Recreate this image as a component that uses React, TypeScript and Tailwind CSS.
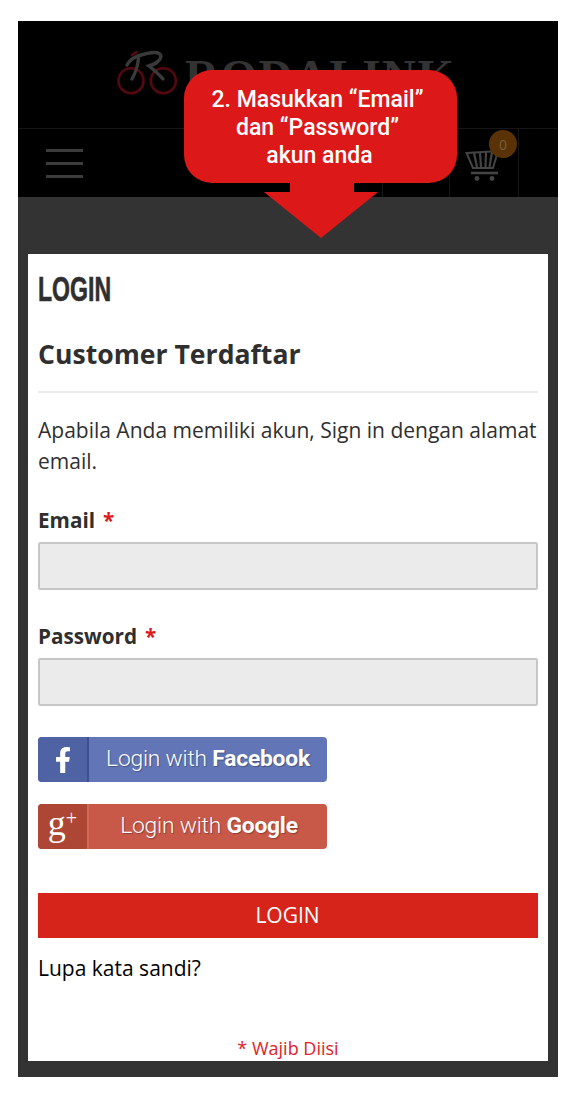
import { FaFacebookF } from "react-icons/fa";

const openSans = { fontFamily: '"Open Sans", sans-serif' };

const Field = ({ label, marginTop }: { label: string; marginTop: string }) => (
  <div className={marginTop}>
    <div className="text-[20.7px] leading-[28px] font-bold text-[#2f2f2f]">
      {label}
      <span className="ml-[8px] text-[#dd1a1a]">*</span>
    </div>
    <div className="mt-[8px] h-[48px] rounded-[2px] border-2 border-[#c6c6c6] bg-[#ebebeb]" />
  </div>
);

const BikeLogo = () => (
  <svg width="62" height="56" viewBox="0 0 62 56" fill="none" strokeLinecap="round">
    <circle cx="14" cy="32.7" r="12.5" stroke="#560810" strokeWidth="2.6" />
    <circle cx="46.3" cy="32.7" r="12.5" stroke="#560810" strokeWidth="2.6" />
    <path d="M10 17 C13 11 19 8 26 6.5 C33 4.5 40 3.5 43 6 C46 10 40 16 32 18 C37 22 42 26 46 31" stroke="#3a3a3a" strokeWidth="3.4" />
    <path d="M21.5 10 C21 17 19 24 15 31" stroke="#3a3a3a" strokeWidth="3.4" />
    <path d="M15 7 L19.5 4" stroke="#5a0a10" strokeWidth="2.4" />
  </svg>
);

const CartIcon = () => (
  <svg width="36" height="36" viewBox="0 0 36 36" fill="none" stroke="#444444">
    <path d="M1.5 6 L33 4 L28 21 H8 Z" strokeWidth="2" />
    <path d="M9 6 L12 20 M15 5.5 L16 20 M21 5 L20.5 20 M27 5 L24.5 20" strokeWidth="2.2" />
    <path d="M6 26 H33" strokeWidth="2.6" />
    <circle cx="12" cy="31.5" r="2.4" fill="#444444" stroke="none" />
    <circle cx="27" cy="31.5" r="2.4" fill="#444444" stroke="none" />
  </svg>
);

const SocialButton = ({
  children,
  icon,
  dark,
  light,
  line,
  className,
}: {
  children: React.ReactNode;
  icon: React.ReactNode;
  dark: string;
  light: string;
  line: string;
  className?: string;
}) => (
  <div className={`flex h-[45px] w-[289px] overflow-hidden rounded-[4px] ${light} ${className ?? ""}`}>
    <div className={`flex w-[51px] items-center justify-center border-r-2 ${dark} ${line}`}>{icon}</div>
    <div
      className="flex flex-1 items-center justify-center text-[22.8px] font-light tracking-[-0.2px] text-white [text-shadow:1px_1px_1px_rgba(0,0,0,0.3)]"
      style={{ fontFamily: "Roboto, sans-serif" }}
    >
      {children}
    </div>
  </div>
);

export default function App() {
  return (
    <div className="h-[1100px] w-[577px] bg-white pl-[18px] pt-[21px]" style={openSans}>
      <div className="relative h-[1056px] w-[540px] bg-[#333333]">
        {/* Header */}
        <div className="h-[176px] bg-black">
          <div className="flex h-[107px] items-start pl-[99px] pt-[27px]">
            <BikeLogo />
            <span
              className="ml-[6px] text-[47px] leading-[56px] font-bold tracking-[1.5px] text-[#333333]"
              style={{ fontFamily: '"Liberation Serif", serif' }}
            >
              RODALINK
            </span>
          </div>
          <div className="flex h-[69px] items-center border-t border-[#161616] pl-[28px]">
            <div className="flex w-[37px] flex-col gap-[10px]">
              <div className="h-[3px] bg-[#3c3c3c]" />
              <div className="h-[3px] bg-[#3c3c3c]" />
              <div className="h-[3px] bg-[#3c3c3c]" />
            </div>
            <div className="ml-[299px] h-full border-l border-[#161616]" />
            <div className="ml-[66px] flex h-full w-[70px] items-end border-x border-[#161616] pb-[14px] pl-[15px]">
              <CartIcon />
            </div>
          </div>
        </div>

        {/* Content */}
        <div className="mx-[10px] mt-[57px] h-[807px] bg-white px-[10px]">
          <h1
            className="origin-left scale-x-[0.66] pt-[15px] text-[35px] leading-[40px] font-bold text-[#2f2f2f] [-webkit-text-stroke:0.6px_#2f2f2f]"
            style={{ fontFamily: '"Liberation Sans", sans-serif' }}
          >
            LOGIN
          </h1>
          <h2 className="mt-[27px] text-[26.6px] leading-[36px] font-bold text-[#2f2f2f]">Customer Terdaftar</h2>
          <div className="mt-[19px] h-[2px] bg-[#ebebeb]" />
          <p className="mt-[22px] text-[21px] leading-[31px] whitespace-nowrap text-[#2f2f2f]">
            Apabila Anda memiliki akun, Sign in dengan alamat
            <br />
            email.
          </p>
          <Field label="Email" marginTop="mt-[29px]" />
          <Field label="Password" marginTop="mt-[32px]" />

          <SocialButton
            className="mt-[31px]"
            light="bg-[#6276b7]"
            dark="bg-[#4f62a3]"
            line="border-[#3f5090]"
            icon={<FaFacebookF className="text-[26px] text-white" />}
          >
            <span>
              Login with <b className="font-bold">Facebook</b>
            </span>
          </SocialButton>
          <SocialButton
            className="mt-[22px]"
            light="bg-[#c85848]"
            dark="bg-[#ae4636]"
            line="border-[#d06a5a]"
            icon={
              <span className="pb-[8px] text-[36px] leading-none text-white" style={{ fontFamily: '"Liberation Serif", serif' }}>
                g<sup className="text-[20px]">+</sup>
              </span>
            }
          >
            <span className="pl-[2px]">
              Login with <b className="font-bold">Google</b>
            </span>
          </SocialButton>

          <div className="mt-[44px] flex h-[45px] items-center justify-center bg-[#d7241a] pr-[1px] pt-[1px] text-[21px] text-white">
            LOGIN
          </div>
          <div className="mt-[15px] text-[21px] leading-[30px] text-black">Lupa kata sandi?</div>
          <div className="mt-[52px] text-center text-[18px] leading-[26px] text-[#e0222a]">* Wajib Diisi</div>
        </div>

        {/* Cart badge */}
        <div className="absolute left-[471px] top-[109px] flex h-[28px] w-[28px] items-center justify-center rounded-full bg-[#5a3208] text-[14px] text-[#7a5c36]">
          0
        </div>

        {/* Callout */}
        <div className="absolute left-[166px] top-[49px] flex h-[113px] w-[273px] flex-col items-center rounded-[28px] bg-[#dd1818] pt-[16px] text-center text-[23px] leading-[28px] font-medium text-white" style={{ fontFamily: "Roboto, sans-serif" }}>
          <div className="pr-[6px]">2. Masukkan “Email”</div>
          <div className="pr-[6px]">dan “Password”</div>
          <div className="pr-[2px]">akun anda</div>
        </div>
        <svg className="absolute left-[245px] top-[161px]" width="116" height="57" viewBox="0 0 116 57" fill="#dd1818">
          <path d="M27 0 H91 V10 H115 L58 56 L1 10 H27 Z" />
        </svg>
      </div>
    </div>
  );
}
